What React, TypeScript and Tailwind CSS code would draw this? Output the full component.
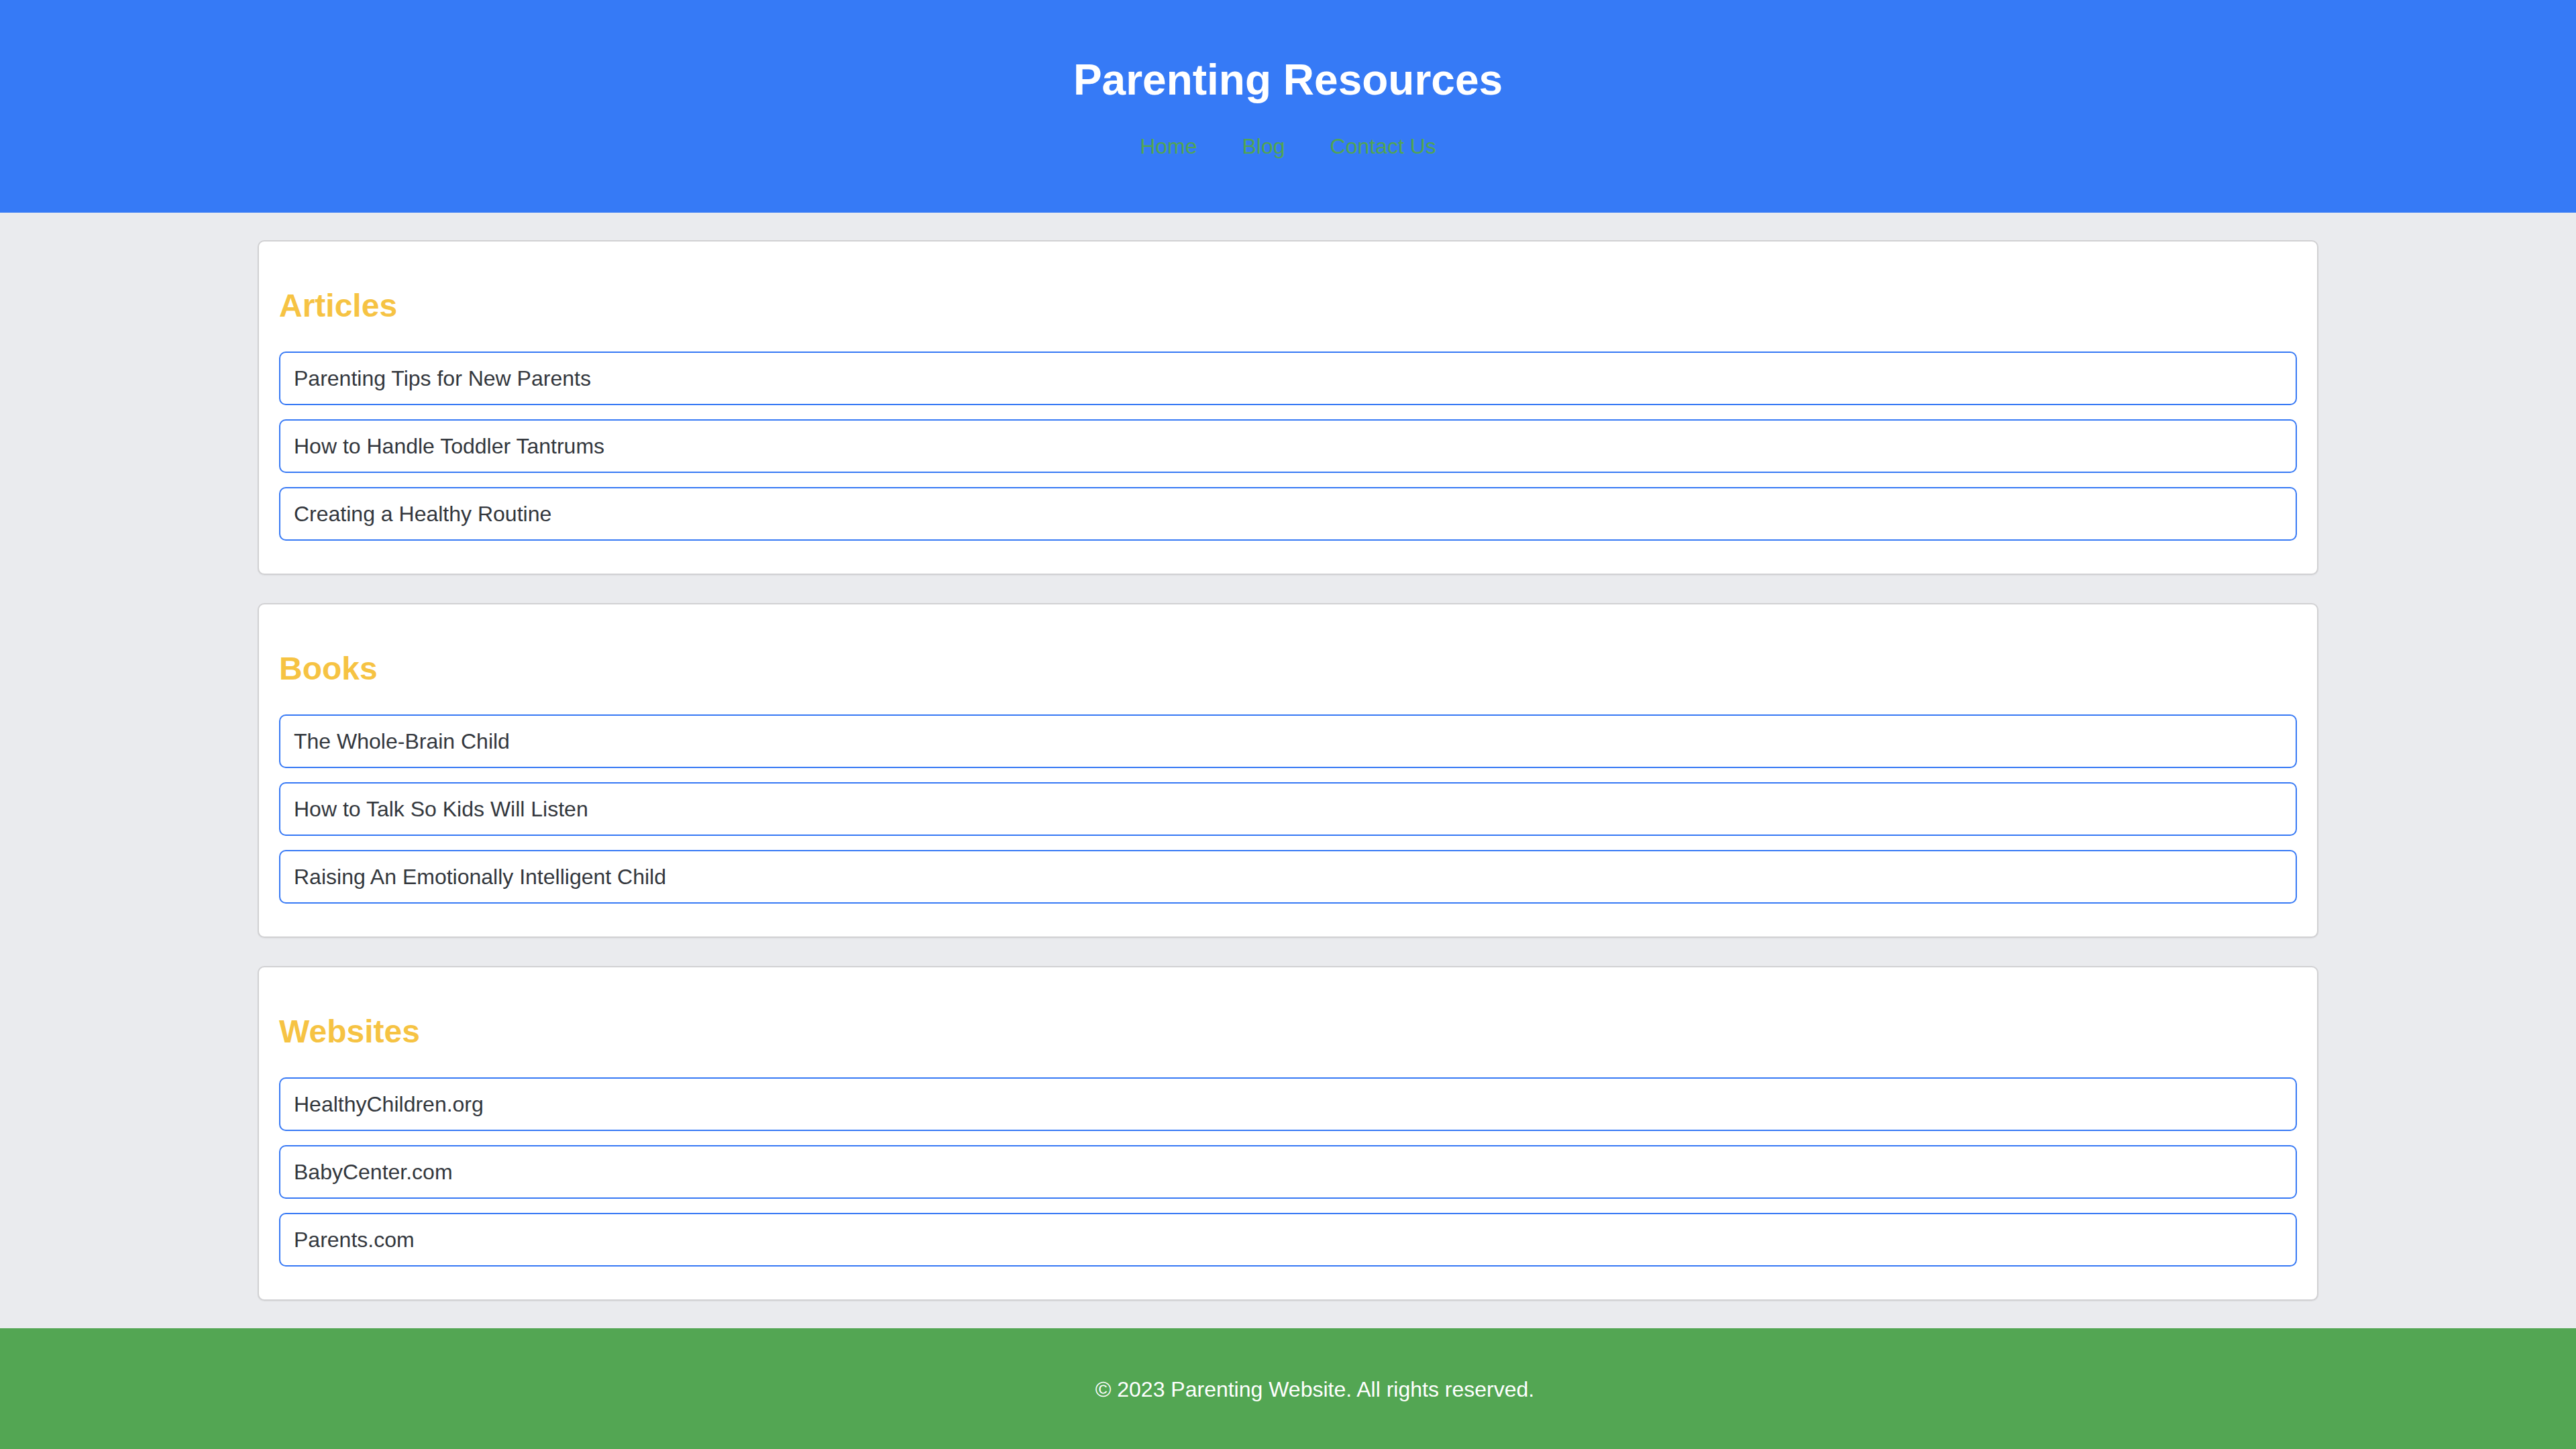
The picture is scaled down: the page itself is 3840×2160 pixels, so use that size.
import React from "react";

const sections: { title: string; items: string[] }[] = [
  {
    title: "Articles",
    items: [
      "Parenting Tips for New Parents",
      "How to Handle Toddler Tantrums",
      "Creating a Healthy Routine",
    ],
  },
  {
    title: "Books",
    items: [
      "The Whole-Brain Child",
      "How to Talk So Kids Will Listen",
      "Raising An Emotionally Intelligent Child",
    ],
  },
  {
    title: "Websites",
    items: ["HealthyChildren.org", "BabyCenter.com", "Parents.com"],
  },
];

export default function App() {
  return (
    <div
      className="min-h-screen w-full bg-[#eaebee] flex flex-col"
      style={{ fontFamily: '"Liberation Sans", Arial, Helvetica, sans-serif' }}
    >
      <header className="bg-[#367af6] pt-[83px] pb-[75px] flex flex-col items-center">
        <h1 className="text-[64px] leading-[72px] font-bold text-white">
          Parenting Resources
        </h1>
        <nav className="mt-[39px] flex items-center gap-[67px] text-[32px] leading-[48px] text-[#52a552]">
          <a href="#">Home</a>
          <a href="#">Blog</a>
          <a href="#">Contact Us</a>
        </nav>
      </header>

      <main className="flex-1 pt-[41px] pb-[41px] flex flex-col gap-[42px]">
        {sections.map((s) => (
          <section
            key={s.title}
            className="w-[3072px] mx-auto bg-white border-2 border-[#d1d1d3] rounded-[10px] px-[30px] pt-[60px] pb-[49px] shadow-[0_1px_2px_rgba(0,0,0,0.06)]"
          >
            <h2 className="text-[48px] leading-[72px] font-bold text-[#f6c343] mb-[32px]">
              {s.title}
            </h2>
            <ul className="flex flex-col gap-[21px]">
              {s.items.map((it) => (
                <li
                  key={it}
                  className="border-2 border-[#3779f5] rounded-[10px] px-[20px] py-[14px] text-[32px] leading-[48px] text-[#33373d]"
                >
                  {it}
                </li>
              ))}
            </ul>
          </section>
        ))}
      </main>

      <footer className="bg-[#53a653] py-[67px] pl-[80px] text-center text-[32px] leading-[48px] text-white">
        © 2023 Parenting Website. All rights reserved.
      </footer>
    </div>
  );
}
